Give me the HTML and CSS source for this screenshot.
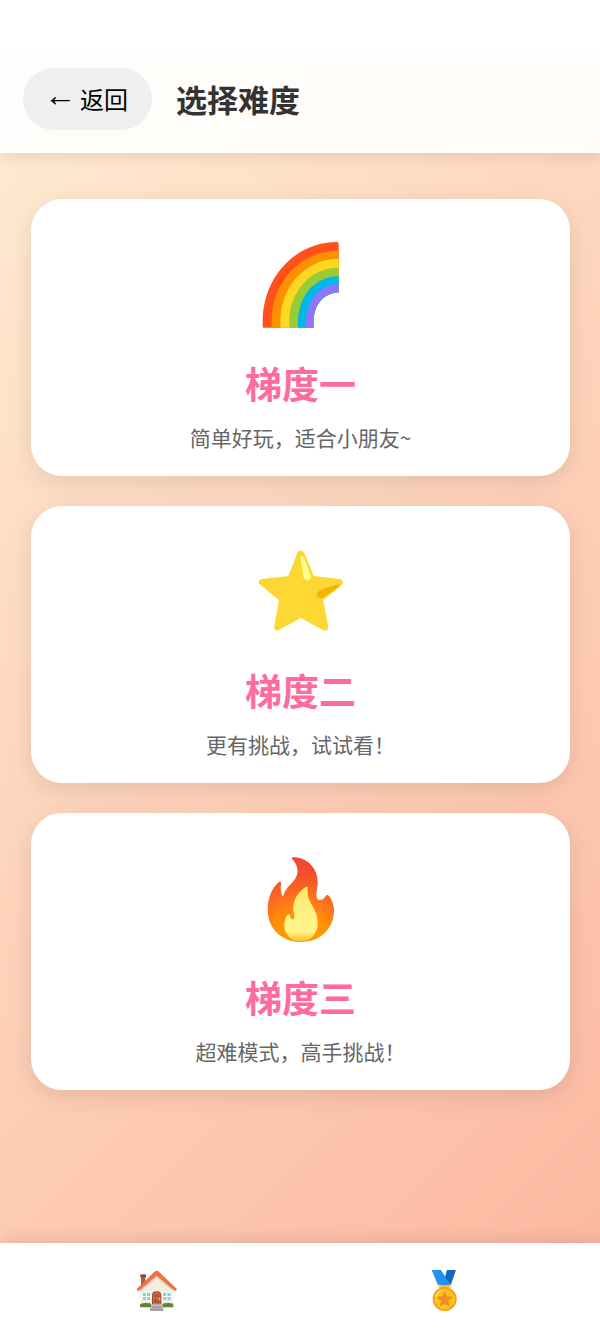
FILE: index.html
```html
<!DOCTYPE html>
<html lang="zh-CN">
<head>
<meta charset="utf-8">
<meta name="viewport" content="width=device-width, initial-scale=1">
<title>选择难度</title>
<link rel="stylesheet" href="styles.css">
</head>
<body>
<div class="app">
  <header class="header">
    <button class="back" type="button"><span class="arrow">←</span><span>返回</span></button>
    <h1 class="title">选择难度</h1>
  </header>

  <main class="levels">
    <button class="card" type="button">
      <svg class="card-icon" viewBox="2 0 360 330" aria-hidden="true">
        <path fill="#ff5119" d="M67 290V275C67 142 165 36 290 36Q295 36 295 41V187C250 190 220 222 220 275V293H71Q67 293 67 290Z"/>
        <path fill="#ff9100" d="M94 293V275C94 157 180 62 295 62V187C250 190 220 222 220 275V293Z"/>
        <path fill="#fdd822" d="M120 293V275C120 172 194 86 295 86V187C250 190 220 222 220 275V293Z"/>
        <path fill="#9acb35" d="M147 293V275C147 187 208 113 295 113V187C250 190 220 222 220 275V293Z"/>
        <path fill="#00b8e8" d="M173 293V275C173 202 222 139 295 139V187C250 190 220 222 220 275V293Z"/>
        <path fill="#8c77fb" d="M197 293V275C197 216 235 163 295 162V187C250 190 220 222 220 275V293Z"/>
      </svg>
      <span class="card-name">梯度一</span>
      <span class="card-desc">简单好玩，适合小朋友~</span>
    </button>

    <button class="card" type="button">
      <svg class="card-icon" viewBox="2 -9 360 330" aria-hidden="true">
        <path fill="#fdd835" d="M172 36Q181 27 191 37L220 108L300 117Q311 121 307 132L249 181L264 262Q262 274 251 272L182 234L114 271Q102 274 101 262L116 181L57 132Q52 121 64 117L144 108Z"/>
        <path fill="#ffff8d" d="M181 55C181 46 187 46 191 53L211 106C215 123 195 126 190 114Z"/>
        <path fill="#f4b400" d="M291 133C299 131 299 138 292 143L251 171C237 180 223 170 231 158Q236 150 250 146Z"/>
      </svg>
      <span class="card-name">梯度二</span>
      <span class="card-desc">更有挑战，试试看！</span>
    </button>

    <button class="card" type="button">
      <svg class="card-icon" viewBox="2 -3 360 330" aria-hidden="true">
        <defs>
          <radialGradient id="flame" gradientUnits="userSpaceOnUse" cx="181" cy="292" r="255">
            <stop offset=".3" stop-color="#ff9800"/>
            <stop offset=".52" stop-color="#ff751c"/>
            <stop offset=".78" stop-color="#f4512c"/>
            <stop offset="1" stop-color="#f44336"/>
          </radialGradient>
          <linearGradient id="core" x1="0" y1="0" x2="0" y2="1">
            <stop offset="0" stop-color="#ffe766"/>
            <stop offset=".5" stop-color="#fff282"/>
            <stop offset=".82" stop-color="#fff48c"/>
            <stop offset="1" stop-color="#ffc02c"/>
          </linearGradient>
        </defs>
        <path fill="url(#flame)" d="M155 41C153 37 160 36 167 37C207 43 232 73 232 112C232 132 224 150 231 161C239 170 251 162 256 153C260 147 265 150 270 158C277 170 282 185 281 199C279 253 239 291 182 291C124 291 82 250 82 194C82 155 99 124 115 112C120 108 123 111 122 117C120 133 122 145 128 156C133 130 154 118 166 99C178 79 170 56 155 41Z"/>
        <path fill="url(#core)" d="M197 126Q203 122 202 133C201 151 204 161 213 177C224 196 234 214 232 240C229 272 207 289 180 289C151 289 132 267 132 242C132 222 139 210 145 208C151 208 148 219 155 223C165 225 162 211 160 202C153 168 174 139 197 126Z"/>
      </svg>
      <span class="card-name">梯度三</span>
      <span class="card-desc">超难模式，高手挑战！</span>
    </button>
  </main>

  <nav class="tabs">
    <a class="tab" href="#home" aria-label="首页">
      <svg class="tab-icon" viewBox="3 0 210 210" aria-hidden="true">
        <path fill="#b65b3e" d="M63 64H76V100H63Z"/>
        <path fill="#854b3c" d="M61 58H78V67H61Z"/>
        <path fill="#f5eee0" d="M110 56L160 103V156H61V103Z"/>
        <path fill="#e0d5c5" d="M61 103L110 60L160 103V110L110 69L61 111Z"/>
        <path fill="#ef7045" d="M105 49Q110 45 115 49L170 101Q172 106 165 108L110 62L56 108Q49 107 51 101Z"/>
        <path fill="#fff" d="M65 110H94V139H65ZM126 110H155V139H126Z"/>
        <path fill="#8ed1cf" d="M68 113H78V123H68ZM81 113H91V123H81ZM68 126H78V136H68ZM81 126H91V136H81ZM129 113H139V123H129ZM142 113H152V123H142ZM129 126H139V136H129ZM142 126H152V136H142Z"/>
        <path fill="#9b4937" d="M96 149V119Q98 109 110 109T124 119V149Z"/>
        <path fill="#df6c42" d="M99 149V121Q101 112 110 112T121 121V149Z"/>
        <path fill="#9b4937" d="M103 121Q105 117 109 117V127H103ZM112 117Q116 117 118 121V127H112ZM103 131H109V144H103ZM112 131H118V144H112Z"/>
        <circle cx="118" cy="133" r="3" fill="#ffca28"/>
        <path fill="#618435" d="M60 157V149Q64 143 71 145Q78 141 83 145Q91 142 94 149V157ZM127 157V149Q132 142 139 145Q146 141 151 145Q158 144 160 149V157Z"/>
        <path fill="#bcb8b9" d="M95 148H125V157H130V166H90V157H95Z"/>
        <path fill="#8e8b8d" d="M95 155H125V158H95ZM90 163H130V167H90Z"/>
      </svg>
    </a>
    <a class="tab" href="#medals" aria-label="奖牌">
      <svg class="tab-icon" viewBox="-3 0 210 210" aria-hidden="true">
        <path fill="#1765c0" d="M111 45H138L122 91H98Z"/>
        <path fill="#2591ef" d="M65 45H93L122 91H84Z"/>
        <path fill="#fbc02d" d="M85 88Q104 96 122 88V97Q104 104 85 97Z"/>
        <circle cx="87" cy="94" r="4" fill="#ffd54f"/>
        <circle cx="121" cy="94" r="4" fill="#ffd54f"/>
        <circle cx="104" cy="132" r="36" fill="#f89a25"/>
        <circle cx="104" cy="132" r="31" fill="#ffc31b"/>
        <path fill="#f28b24" d="M104 107L111 124L129 125L115 137L119 155L104 146L89 155L93 137L79 125L97 124Z"/>
        <path fill="none" stroke="#ffe36a" stroke-width="4" stroke-linecap="round" d="M78 124Q83 111 94 106"/>
      </svg>
    </a>
  </nav>
</div>
</body>
</html>
```
FILE: styles.css
```css
* {
  box-sizing: border-box;
}

body {
  margin: 0;
  padding-top: 54px;
  min-height: 100vh;
  display: flex;
  background: #fff;
  color: #333;
  font-family: "Noto Sans CJK SC", sans-serif;
}

button {
  border: 0;
  font-family: inherit;
  cursor: pointer;
}

.app {
  flex: 1;
  display: flex;
  flex-direction: column;
  overflow: hidden;
  background: linear-gradient(135deg, #ffecd2 0%, #fcb69f 100%);
}

.header {
  display: flex;
  align-items: center;
  gap: 24px;
  padding: 14px 23px 23px;
  background: rgba(255, 255, 255, 0.9);
  box-shadow: 0 3px 15px rgba(0, 0, 0, 0.1);
}

.back {
  display: flex;
  align-items: flex-start;
  gap: 4px;
  padding: 14px 24px 14px 21px;
  border-radius: 31px;
  background: #efefef;
  color: #000;
  font-size: 24px;
  line-height: 34px;
}

.arrow {
  font-family: "Liberation Serif", serif;
  font-size: 32px;
  line-height: 26px;
}

.title {
  margin: 0;
  font-size: 31px;
  font-weight: 700;
  line-height: 46px;
}

.levels {
  flex: 1;
  display: flex;
  flex-direction: column;
  gap: 30px;
  padding: 46px 30px 46px 31px;
}

.card {
  display: flex;
  flex-direction: column;
  align-items: center;
  padding: 31px 31px 24px;
  border-radius: 31px;
  background: #fff;
  box-shadow: 0 6px 23px rgba(0, 0, 0, 0.1);
}

.card-icon {
  width: 120px;
  height: 110px;
}

.card-name {
  margin: 20px 0 16px;
  color: #ff6b9d;
  font-size: 37px;
  font-weight: 700;
  line-height: 46px;
}

.card-desc {
  color: #666;
  font-size: 21px;
  line-height: 30px;
}

.tabs {
  display: flex;
  padding: 12px 12px 8px;
  background: #fff;
  box-shadow: 0 -3px 15px rgba(0, 0, 0, 0.1);
}

.tab {
  flex: 1;
  display: flex;
  justify-content: center;
}

.tab-icon {
  width: 70px;
  height: 70px;
}
```
